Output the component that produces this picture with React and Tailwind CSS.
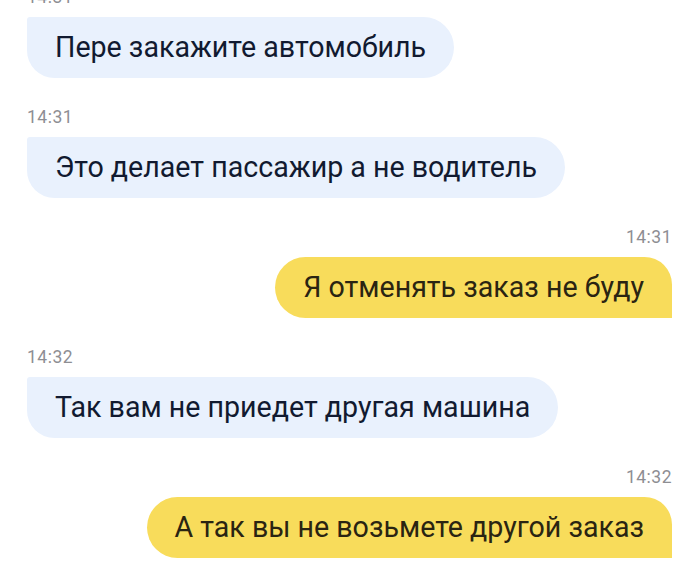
import React from 'react'

const messages = [
  { time: '14:31', text: 'Пере закажите автомобиль', mine: false },
  { time: '14:31', text: 'Это делает пассажир а не водитель', mine: false },
  { time: '14:31', text: 'Я отменять заказ не буду', mine: true },
  { time: '14:32', text: 'Так вам не приедет другая машина', mine: false },
  { time: '14:32', text: 'А так вы не возьмете другой заказ', mine: true },
]

function Message({ msg, first }) {
  return (
    <div className={`flex flex-col ${msg.mine ? 'items-end' : 'items-start'} ${first ? '-mt-[13px]' : 'mt-[29px]'}`}>
      <div className="text-[17.5px] leading-[20px] tracking-[0.5px] text-[#8e8e93] mb-[10px]">{msg.time}</div>
      <div
        className={`h-[61px] flex items-center px-[28px] text-[28.6px] ${
          msg.mine
            ? 'bg-[#f8dc5b] text-[#2a2412] rounded-l-[31px] rounded-tr-[28px]'
            : 'bg-[#e9f1fd] text-[#111a30] rounded-r-[31px] rounded-bl-[28px] rounded-tl-[3px]'
        }`}
      >
        {msg.text}
      </div>
    </div>
  )
}

export default function App() {
  return (
    <div className="w-[700px] h-[573px] overflow-hidden bg-white px-[27px] pr-[28px] font-['Roboto',sans-serif]">
      {messages.map((m, i) => (
        <Message key={i} msg={m} first={i === 0} />
      ))}
    </div>
  )
}
